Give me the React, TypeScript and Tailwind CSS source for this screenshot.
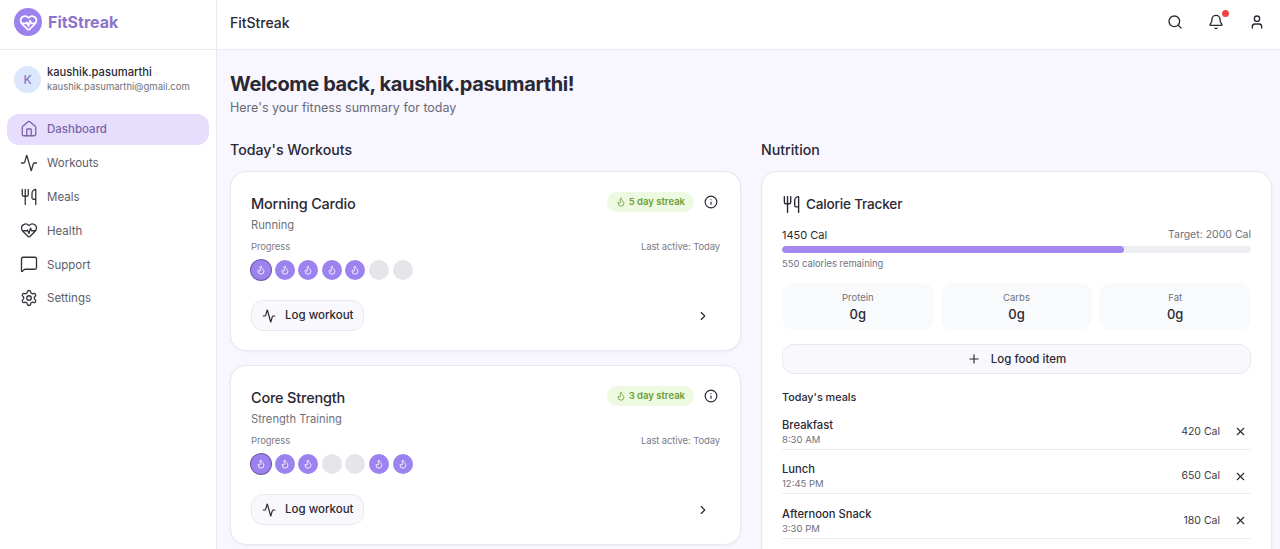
import { Activity, ChevronRight, Flame, HeartPulse, Home, Info, MessageSquare, Plus, Search, Settings, Bell, User, Utensils, X } from 'lucide-react';
import clsx from 'clsx';

const navItems = [
  { label: 'Dashboard', icon: Home, active: true },
  { label: 'Workouts', icon: Activity },
  { label: 'Meals', icon: Utensils },
  { label: 'Health', icon: HeartPulse },
  { label: 'Support', icon: MessageSquare },
  { label: 'Settings', icon: Settings },
];

const workouts = [
  { name: 'Morning Cardio', type: 'Running', streak: 5, days: [1, 1, 1, 1, 1, 0, 0] },
  { name: 'Core Strength', type: 'Strength Training', streak: 3, days: [1, 1, 1, 0, 0, 1, 1] },
];

const meals = [
  { name: 'Breakfast', time: '8:30 AM', cal: 420 },
  { name: 'Lunch', time: '12:45 PM', cal: 650 },
  { name: 'Afternoon Snack', time: '3:30 PM', cal: 180 },
];

const WorkoutCard = ({ workout }: { workout: (typeof workouts)[number] }) => (
  <div className="h-[180px] shrink-0 rounded-2xl border border-[#e9e7f0] bg-white px-5 pt-5 shadow-[0_1px_3px_rgba(0,0,0,0.05)]">
    <div className="flex items-start justify-between">
      <div>
        <h3 className="text-[14.5px] leading-6 font-medium tracking-[-0.2px] text-[#2a2833]">{workout.name}</h3>
        <p className="text-[11.2px] leading-[18px] text-[#70707c]">{workout.type}</p>
      </div>
      <div className="flex items-center gap-[10px]">
        <span className="flex h-[20px] items-center gap-[3px] rounded-full bg-[#edf9e0] px-[9px] text-[9.5px] font-semibold text-[#6f9f35]">
          <Flame size={10} />
          {workout.streak} day streak
        </span>
        <Info size={14} className="mr-[2px] text-[#2a2833]" />
      </div>
    </div>
    <div className="mt-[5px] flex items-center justify-between text-[9.5px] leading-4 tracking-[-0.12px] text-[#7c7c88]">
      <span>Progress</span>
      <span>Last active: Today</span>
    </div>
    <div className="mt-[5px] flex gap-[3.6px]">
      {workout.days.map((on, i) => (
        <div
          key={i}
          className={clsx(
            'flex h-5 w-5 items-center justify-center rounded-full',
            on ? 'bg-[#9b82ee] text-white' : 'bg-[#e5e6ea]',
            i === 0 && 'ring-1 ring-[#6f5aa8]',
          )}
        >
          {on ? <Flame size={10} /> : null}
        </div>
      ))}
    </div>
    <div className="mt-[20px] flex items-center justify-between">
      <button className="flex h-[31px] w-[113px] items-center gap-[9px] rounded-xl border border-[#e9e7f0] bg-[#f9f8fd] pl-[10px] text-[11.5px] font-medium text-[#2a2833]">
        <Activity size={14} />
        Log workout
      </button>
      <ChevronRight size={14} className="mr-[10px] text-[#2a2833]" />
    </div>
  </div>
);

export default function App() {
  return (
    <div className="flex h-[549px] w-[1280px] overflow-hidden bg-[#f8f6fe] font-['Inter',sans-serif] text-[#2a2833]">
      {/* Sidebar */}
      <aside className="flex w-[217px] shrink-0 flex-col border-r border-[#ebe9f2] bg-white">
        <div className="flex h-[50px] shrink-0 items-center gap-[6px] border-b border-[#ebe9f2] pb-[5px] pl-[14px]">
          <div className="flex h-7 w-7 items-center justify-center rounded-full bg-[#9b82ee] text-white">
            <HeartPulse size={19} strokeWidth={2.2} />
          </div>
          <span className="text-[16px] font-bold text-[#8b74cc]">FitStreak</span>
        </div>
        <div className="flex items-center gap-[6px] pt-[15px] pl-[14px]">
          <div className="flex h-[27px] w-[27px] items-center justify-center rounded-full bg-[#dbe7fd] text-xs font-medium text-[#8b74cc]">
            K
          </div>
          <div>
            <div className="text-[11.2px] leading-[15px] font-medium text-[#2d2b33]">kaushik.pasumarthi</div>
            <div className="text-[9.5px] leading-[14px] text-[#70707c]">kaushik.pasumarthi@gmail.com</div>
          </div>
        </div>
        <nav className="mt-[19.5px] flex flex-col gap-[2.8px] px-[7px]">
          {navItems.map(({ label, icon: Icon, active }) => (
            <div
              key={label}
              className={clsx(
                'flex h-[31px] items-center gap-[9px] rounded-xl pl-[13px] text-[11.5px]',
                active ? 'bg-[#e6defc] font-medium text-[#7a64a8]' : 'text-[#5d5d69]',
              )}
            >
              <Icon size={18} strokeWidth={1.75} className={active ? 'text-[#7a64a8]' : 'text-[#33323b]'} />
              <span className="pt-[2px]">{label}</span>
            </div>
          ))}
        </nav>
      </aside>

      <div className="flex min-w-0 flex-1 flex-col">
        {/* Top bar */}
        <header className="flex h-[50px] shrink-0 items-center justify-between border-b border-[#ebe9f2] bg-white pr-[15px] pb-[5px] pl-[13px]">
          <span className="text-[14px] font-medium text-[#2a2833]">FitStreak</span>
          <div className="flex items-center gap-[25px]">
            <Search size={16} />
            <div className="relative">
              <Bell size={16} />
              <span className="absolute -top-[4px] -right-[4.5px] h-[7px] w-[7px] rounded-full bg-[#ef4444]" />
            </div>
            <User size={16} />
          </div>
        </header>

        {/* Content */}
        <main className="flex min-h-0 flex-1 flex-col overflow-hidden pt-[20px] pr-2 pl-[13px]">
          <h1 className="text-[20px] leading-7 font-bold tracking-[-0.36px] text-[#2a2833]">Welcome back, kaushik.pasumarthi!</h1>
          <p className="text-[12.5px] leading-[19px] text-[#6a6a76]">Here's your fitness summary for today</p>

          <div className="mt-[24px] grid grid-cols-2 gap-5">
            <section>
              <h2 className="text-[14.2px] leading-[18px] font-medium">Today's Workouts</h2>
              <div className="mt-[12px] flex flex-col gap-[14px]">
                {workouts.map((w) => (
                  <WorkoutCard key={w.name} workout={w} />
                ))}
              </div>
            </section>

            <section>
              <h2 className="text-[14.2px] leading-[18px] font-medium">Nutrition</h2>
              <div className="mt-[12px] h-[420px] rounded-2xl border border-[#e9e7f0] bg-white px-5 pt-5 shadow-[0_1px_3px_rgba(0,0,0,0.05)]">
                <div className="flex items-center gap-[5px]">
                  <Utensils size={19} strokeWidth={1.75} />
                  <h3 className="text-[13.6px] leading-6 font-medium tracking-[-0.2px]">Calorie Tracker</h3>
                </div>
                <div className="mt-[10px] flex justify-between text-[11px] leading-[18px]">
                  <span>1450 Cal</span>
                  <span className="text-[10.5px] text-[#70707c]">Target: 2000 Cal</span>
                </div>
                <div className="mt-[2px] h-[7px] overflow-hidden rounded-full bg-[#eeeef2]">
                  <div className="h-full rounded-full bg-[#a488f0]" style={{ width: '73%' }} />
                </div>
                <p className="mt-[3px] text-[9.4px] leading-[15px] text-[#70707c]">550 calories remaining</p>

                <div className="mt-[12px] grid grid-cols-3 gap-[7px]">
                  {['Protein', 'Carbs', 'Fat'].map((macro) => (
                    <div key={macro} className="flex h-[47px] flex-col items-center justify-center rounded-xl bg-[#f9fafb]">
                      <span className="text-[9.5px] leading-[15px] text-[#70707c]">{macro}</span>
                      <span className="text-[13px] leading-[18px] font-medium">0g</span>
                    </div>
                  ))}
                </div>

                <button className="mt-[14px] flex h-[30px] w-full items-center justify-center gap-[10px] rounded-xl border border-[#e9e7f0] bg-[#f9f8fd] text-[11.5px] font-medium">
                  <Plus size={14} />
                  <span className="pt-[2px]">Log food item</span>
                </button>

                <h4 className="mt-[15px] text-[10.8px] leading-[18px] font-medium">Today's meals</h4>
                <div className="-mt-[2px] flex flex-col">
                  {meals.map((meal) => (
                    <div key={meal.name} className="flex h-[44.6px] items-end justify-between border-b border-[#eeeef2] pb-[3px]">
                      <div>
                        <div className="text-[11.2px] leading-[15px] font-medium">{meal.name}</div>
                        <div className="text-[9.5px] leading-[13px] text-[#70707c]">{meal.time}</div>
                      </div>
                      <div className="flex h-[28px] items-center gap-[14px] pr-[4px] text-[10.5px] text-[#3c3b44]">
                        <span>{meal.cal} Cal</span>
                        <X size={13} className="text-[#2a2833]" />
                      </div>
                    </div>
                  ))}
                </div>
              </div>
            </section>
          </div>
        </main>
      </div>
    </div>
  );
}
